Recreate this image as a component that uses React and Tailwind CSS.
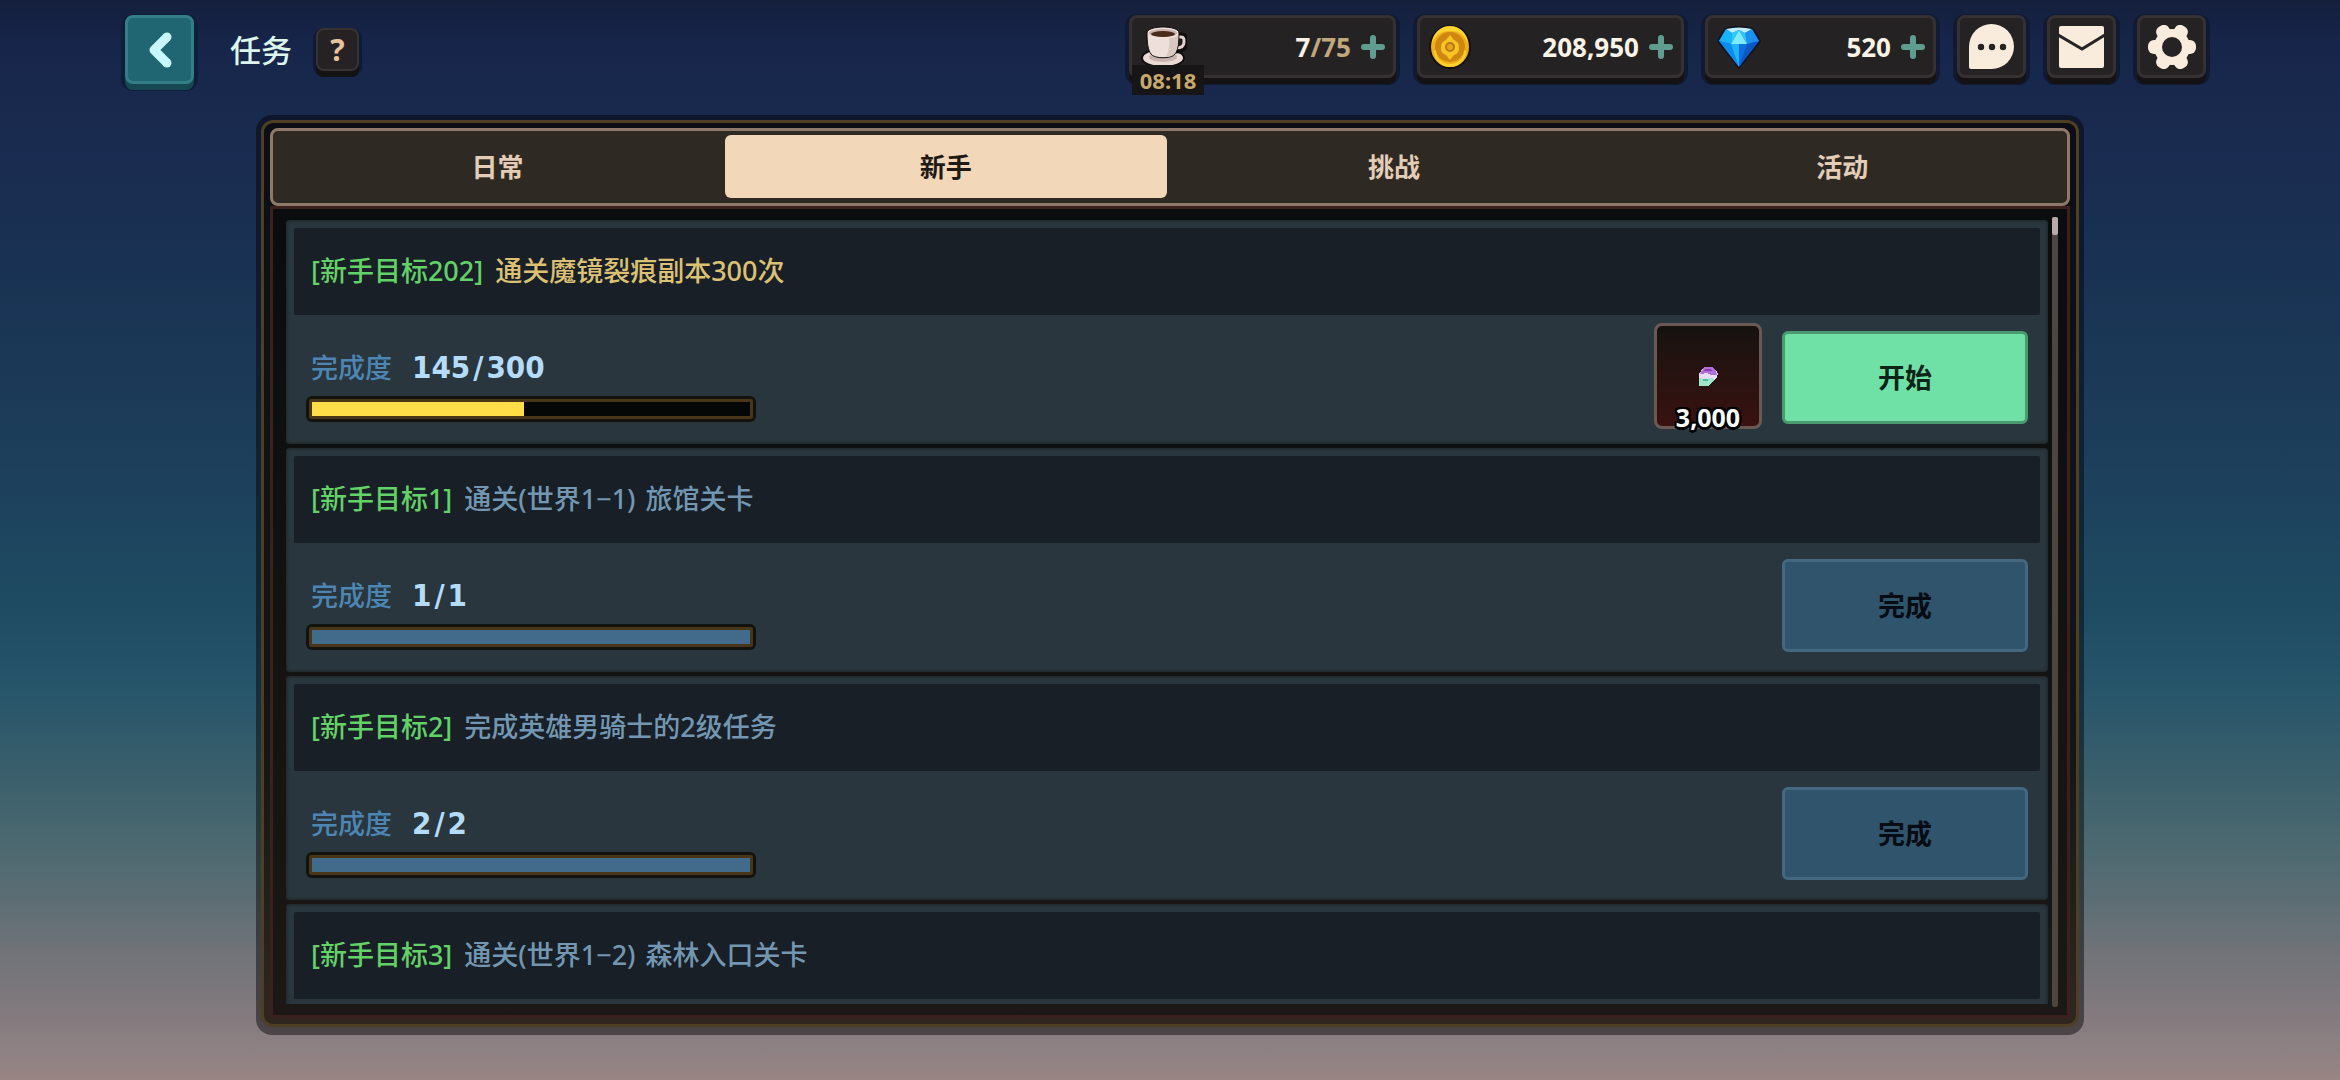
import React, { useState } from 'react';

const tabs = [
  { id: 'daily', label: '日常' },
  { id: 'newbie', label: '新手' },
  { id: 'challenge', label: '挑战' },
  { id: 'event', label: '活动' }
];

const quests = [
  {
    id: 202,
    tag: '[新手目标202]',
    title: ['通关魔镜裂痕副本300次'],
    done: 145,
    total: 300,
    reward: '3,000'
  },
  { id: 1, tag: '[新手目标1]', title: ['通关(世界1−1)', '旅馆关卡'], done: 1, total: 1 },
  { id: 2, tag: '[新手目标2]', title: ['完成英雄男骑士的2级任务'], done: 2, total: 2 },
  { id: 3, tag: '[新手目标3]', title: ['通关(世界1−2)', '森林入口关卡'] }
];

function CupIcon() {
  return (
    <svg viewBox="0 0 46 42" className="w-[46px] h-[42px] shrink-0" aria-hidden="true">
      <ellipse cx="22" cy="32" rx="21" ry="9" fill="#eadad6" stroke="#120e0e" strokeWidth="2" />
      <ellipse cx="22" cy="31" rx="14" ry="5" fill="#c9b3b0" />
      <path d="M36 10h4c4 0 4 3 4 6 0 5-3 8-9 8" fill="none" stroke="#120e0e" strokeWidth="7" />
      <path d="M36 11h4c3 0 3 2 3 5 0 4-3 6-8 6" fill="none" stroke="#e6d3cf" strokeWidth="3" />
      <path d="M6 7c0-4 8-6 16-6s16 2 16 6c0 10-1 17-4 21-3 5-21 5-24 0C7 24 6 17 6 7z" fill="#eedfdb" stroke="#120e0e" strokeWidth="1" />
      <path d="M28 12c4 0 7-1 9-3 0 9-1 15-4 19-2 2-5 3-8 3 3-6 4-13 3-19z" fill="#d9c7c3" />
      <ellipse cx="22" cy="7" rx="14" ry="4" fill="#c9b3ac" />
      <ellipse cx="22" cy="8" rx="12" ry="3" fill="#4b2a1c" />
    </svg>
  );
}

function CoinIcon() {
  return (
    <svg viewBox="0 0 42 44" className="w-[42px] h-[44px] shrink-0" aria-hidden="true">
      <ellipse cx="21" cy="22" rx="20" ry="21" fill="#f0ae18" stroke="#17110a" strokeWidth="2" />
      <path d="M3 19a18 18 0 0 1 36 0c-3-9-9-13-18-13S6 10 3 19z" fill="#fbd52e" />
      <circle cx="21" cy="22" r="15" fill="#cf8612" />
      <path d="M7 25a14 14 0 0 0 28 0l2 1a16 16 0 0 1-32 0z" fill="#ffcf2c" />
      <path d="M21 10l4 5c4 2 5 4 5 8s-2 6-5 7l-4 5-4-5c-3-1-5-3-5-7s1-6 5-8z" fill="#f8c424" />
      <circle cx="21" cy="22" r="5" fill="#b97812" />
      <circle cx="21" cy="22" r="3" fill="#e5a51e" />
    </svg>
  );
}

function DiamondIcon() {
  return (
    <svg viewBox="0 0 44 44" className="w-[44px] h-[44px] shrink-0" aria-hidden="true">
      <path d="M8 4Q22 0 36 4l7 12-21 27L1 16z" fill="#0a7fe8" stroke="#0c1322" strokeWidth="2" strokeLinejoin="round" />
      <path d="M9 4Q22 1 35 4L28 8 22 5l-7 3z" fill="#bdeeff" />
      <path d="M9 4l6 4-1 11L2 16z" fill="#19b3fa" />
      <path d="M35 4l-7 4 2 11 12-3z" fill="#1c8ff2" />
      <path d="M22 5l8 14H14z" fill="#7eebfd" />
      <path d="M22 5l-7 3-1 11zM22 5l6 3 2 11z" fill="#2ec8fc" />
      <path d="M2 16l12 3 8 23z" fill="#0b8cf0" />
      <path d="M14 19h8v23z" fill="#22b4fb" />
      <path d="M22 19h8l-8 23z" fill="#0b6fdd" />
      <path d="M42 16l-12 3-8 23z" fill="#0a58c6" />
    </svg>
  );
}

function PlusIcon() {
  return (
    <svg viewBox="0 0 24 24" className="w-6 h-6" aria-hidden="true">
      <path d="M12 3v18M3 12h18" stroke="#5f9d90" strokeWidth="6" strokeLinecap="round" />
    </svg>
  );
}

function ChatIcon() {
  return (
    <svg viewBox="0 0 45 45" className="w-[45px] h-[45px]" aria-hidden="true">
      <path d="M0 22.500A22.500 22.500 0 1 1 22.500 45H2q-2 0-2-2z" fill="#faecdc" />
      <circle cx="12" cy="23" r="3.200" fill="#262324" />
      <circle cx="23" cy="23" r="3.200" fill="#262324" />
      <circle cx="34" cy="23" r="3.200" fill="#262324" />
    </svg>
  );
}

function MailIcon() {
  return (
    <svg viewBox="0 0 45 42" className="w-[45px] h-[42px]" aria-hidden="true">
      <rect width="45" height="42" rx="2" fill="#faecdc" />
      <path d="M-1 9l24 14L46 9" fill="none" stroke="#262324" strokeWidth="3" />
    </svg>
  );
}

function GearIcon() {
  return (
    <svg viewBox="0 0 48 44" className="w-12 h-11" aria-hidden="true">
      <g fill="#faecdc">
        <circle cx="24" cy="22" r="18" />
        <rect x="0" y="15" width="48" height="14" rx="6" />
        <rect x="0" y="15" width="48" height="14" rx="6" transform="rotate(60 24 22)" />
        <rect x="0" y="15" width="48" height="14" rx="6" transform="rotate(120 24 22)" />
      </g>
      <circle cx="24" cy="22" r="10" fill="#262324" />
    </svg>
  );
}

function ShardIcon() {
  return (
    <svg viewBox="0 0 20 20" className="w-5 h-5" shapeRendering="crispEdges" aria-hidden="true">
      <path d="M6 1h8l4 3 2 4-2 5-8 7H1V8z" fill="#eadcf8" />
      <path d="M6 1h8l4 3 1 5h-6l-4-2-7 1z" fill="#b070d8" />
      <path d="M7 3h5l2 2H6z" fill="#8d3bb8" />
      <path d="M1 12l5 1 8-1 3 2-7 6H1z" fill="#9ee8c8" />
      <path d="M5 13h5v2H5z" fill="#56b8a0" />
    </svg>
  );
}

function Resource({ icon, label, width, children, timer }) {
  return (
    <div className={`relative flex items-center h-[63px] pl-[9px] pr-2 rounded-lg bg-[#252223] border-3 border-[#353032] shadow-[0_6px_0_#151214,0_3px_0_4px_#101a33] ${width}`}>
      {icon}
      <span className="flex-1 text-right font-bold text-[26px] leading-8 text-[#fbf3e6]">{children}</span>
      <button type="button" aria-label={label} className="ml-[10px] cursor-pointer">
        <PlusIcon />
      </button>
      {timer && (
        <span className="absolute left-0 top-[47px] w-[72px] h-[30px] bg-[#181516] text-center text-[22px] leading-[30px] font-bold text-[#c8a96c]">
          {timer}
        </span>
      )}
    </div>
  );
}

function IconButton({ label, children }) {
  return (
    <button
      type="button"
      aria-label={label}
      className="flex items-center justify-center w-[69px] h-[63px] rounded-lg bg-[#252223] border-3 border-[#353032] shadow-[0_6px_0_#151214,0_3px_0_4px_#101a33] cursor-pointer"
    >
      {children}
    </button>
  );
}

function QuestProgress({ quest }) {
  const finished = quest.done >= quest.total;
  const percent = (quest.done / quest.total) * 100;

  return (
    <div className="flex items-start justify-between px-3">
      <div className="pt-[33px]">
        <div className="flex items-center h-10 pl-[5px] gap-5">
          <span className="text-[27px] text-[#4d86b2] font-medium">完成度</span>
          <span className="font-['DejaVu_Sans_Condensed','DejaVu_Sans',sans-serif] text-[31px] font-bold text-[#b4dcfa] pb-[2px]">
            {quest.done}<span className="mx-[3px]">/</span>{quest.total}
          </span>
        </div>
        <div className="mt-2 w-[450px] h-[26px] rounded-md bg-[#12130f] p-[3px]">
          <div className="h-full rounded-xs border-3 border-[#493518] bg-[#050706]">
            <div
              className={`h-full ${finished ? 'bg-[#426a8a]' : 'bg-[#ffdd48]'}`}
              style={{ width: `${percent}%` }}
            />
          </div>
        </div>
      </div>

      <div className="flex items-start gap-5 pt-2">
        {quest.reward && (
          <div className="relative flex items-center justify-center w-[108px] h-[106px] rounded-lg border-3 border-[#695853] bg-linear-to-b from-[#161210] to-[#391110]">
            <ShardIcon />
            <span className="absolute inset-x-0 top-[75px] text-center text-[25px] leading-8 font-bold text-white [text-shadow:2px_0_#000,-2px_0_#000,0_2px_#000,0_-2px_#000,2px_2px_#000,-2px_2px_#000,2px_-2px_#000,-2px_-2px_#000,0_3px_#000]">
              {quest.reward}
            </span>
          </div>
        )}
        <button
          type="button"
          className={`mt-2 w-[246px] h-[93px] pt-[2px] rounded-md border-3 text-[27px] font-bold cursor-pointer ${
            finished
              ? 'bg-[#2f546c] border-[#44687f] text-[#050c14]'
              : 'bg-[#70e1a6] border-[#4a9a70] text-[#0b2418]'
          }`}
        >
          {finished ? '完成' : '开始'}
        </button>
      </div>
    </div>
  );
}

function QuestCard({ quest }) {
  const muted = !(quest.done < quest.total);

  return (
    <li className="h-[224px] shrink-0 px-2 pt-2 rounded-sm bg-[#29363e] shadow-[inset_0_0_3px_1px_#1f2629]">
      <h2 className="flex items-center gap-3 h-[87px] pl-[17px] bg-[#181f26] text-[27px] font-medium rounded-xs">
        <span className="text-[#62d268]">{quest.tag}</span>
        <span className={`flex gap-[10px] ${muted ? 'text-[#7397b2]' : 'text-[#dcc174]'}`}>
          {quest.title.map((part) => (
            <span key={part}>{part}</span>
          ))}
        </span>
      </h2>
      {quest.total && <QuestProgress quest={quest} />}
    </li>
  );
}

export default function App() {
  const [activeTab, setActiveTab] = useState('newbie');

  return (
    <div className="h-screen flex flex-col overflow-hidden bg-[linear-gradient(to_bottom,#141f3c_0%,#17254a_4%,#1a2b50_13%,#193253_25%,#1d3f5b_43%,#1e4b62_56%,#27556a_64%,#385e6b_71%,#48676f_77%,#5b6d74_83%,#6f7378_88%,#837a7e_94%,#8d8183_97%,#988482_100%)] font-['Noto_Sans','Noto_Sans_CJK_SC',sans-serif]">

      {/* Top bar */}
      <header className="flex items-start justify-between h-[115px] shrink-0 pt-[15px] pl-[125px] pr-[134px]">
        <div className="flex items-center h-[69px]">
          <button
            type="button"
            aria-label="返回"
            className="flex items-center justify-center w-[69px] h-[69px] rounded-lg bg-[#1f6672] border-3 border-[#337e89] shadow-[0_6px_0_#174751,0_3px_0_4px_#0d2038] cursor-pointer"
          >
            <svg viewBox="0 0 24 36" className="w-6 h-9" aria-hidden="true">
              <path d="M19 5L6 18l13 13" fill="none" stroke="#c8f8ff" strokeWidth="9" strokeLinejoin="round" strokeLinecap="butt" />
              <circle cx="19" cy="5" r="4.500" fill="#c8f8ff" />
              <circle cx="19" cy="31" r="4.500" fill="#c8f8ff" />
            </svg>
          </button>
          <h1 className="ml-9 text-[31px] font-medium text-[#dcf6ee] font-['Noto_Sans_CJK_SC',sans-serif]">任务</h1>
          <button
            type="button"
            aria-label="帮助"
            className="ml-6 flex items-center justify-center w-[43px] h-[43px] rounded-lg bg-[#262223] border-2 border-[#393233] shadow-[0_6px_0_#151214,0_3px_0_3px_#101a33] text-[30px] font-bold text-[#e9c3a0] cursor-pointer"
          >
            ?
          </button>
        </div>

        <div className="flex items-start gap-[21px]">
          <Resource icon={<CupIcon />} label="补充体力" width="w-[267px]" timer="08:18">
            7<span className="text-[#c0a77c]">/75</span>
          </Resource>
          <Resource icon={<CoinIcon />} label="购买金币" width="w-[267px]">208,950</Resource>
          <Resource icon={<DiamondIcon />} label="购买钻石" width="w-[231px]">520</Resource>
          <IconButton label="聊天"><ChatIcon /></IconButton>
          <IconButton label="邮件"><MailIcon /></IconButton>
          <IconButton label="设置"><GearIcon /></IconButton>
        </div>
      </header>

      {/* Quest panel */}
      <main className="flex-1 min-h-0 mx-[256px] mb-[45px] p-[5px] pb-2 rounded-2xl bg-black/45">
        <div className="h-full flex flex-col rounded-xl border-3 border-[#4e3e24] bg-[linear-gradient(to_bottom,#0c0e14,#141615_70%,#30261f)] px-[6px] pt-[5px] pb-[6px]">

          <nav role="tablist" className="flex gap-[7px] h-[78px] shrink-0 px-1 pt-1 pb-[5px] rounded-lg border-3 border-[#8e796a] bg-[#2f2924]">
            {tabs.map((tab) => (
              <button
                key={tab.id}
                type="button"
                role="tab"
                aria-selected={activeTab === tab.id}
                onClick={() => setActiveTab(tab.id)}
                className={`flex-1 rounded-md pt-[2px] text-[26px] font-bold cursor-pointer ${
                  activeTab === tab.id ? 'bg-[#f2d7b8] text-[#1f1a16]' : 'text-[#e3cdb6]'
                }`}
              >
                {tab.label}
              </button>
            ))}
          </nav>

          <div className="flex-1 min-h-0 flex gap-1 pl-[13px] pr-[9px] py-2 border-3 border-[#3c201d] bg-linear-to-b from-[#0a0c0d] to-[#1b1815]">
            <ul className="flex-1 min-h-0 my-[3px] flex flex-col gap-1 overflow-hidden">
              {quests.map((quest) => (
                <QuestCard key={quest.id} quest={quest} />
              ))}
            </ul>
            <div className="w-[6px] rounded-xs bg-[#4d453f]">
              <div className="h-[18px] rounded-xs bg-[#b8aaa6]" />
            </div>
          </div>
        </div>
      </main>
    </div>
  );
}
